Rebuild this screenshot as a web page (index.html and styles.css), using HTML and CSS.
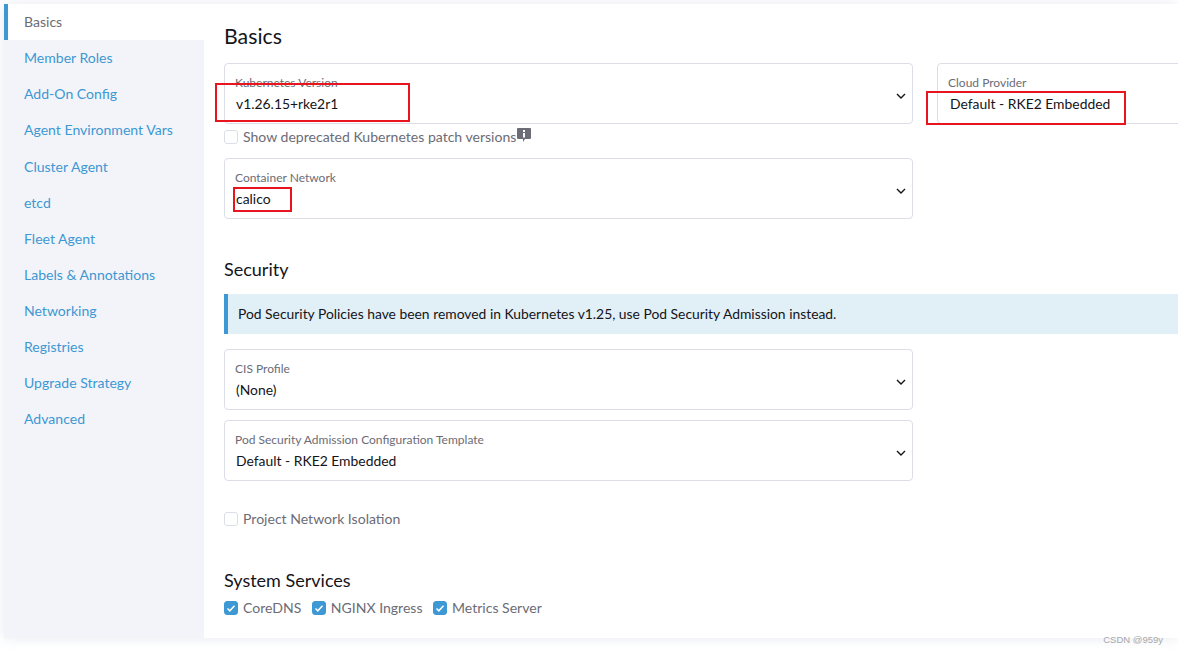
FILE: index.html
```html
<!DOCTYPE html>
<html>

<head>
    <meta charset="UTF-8">
    <title>Cluster Configuration</title>
    <link rel="stylesheet" href="styles.css">
</head>

<body>
<div class="panel">
    <ul class="tabs">
        <li class="active"><a>Basics</a></li>
        <li><a>Member Roles</a></li>
        <li><a>Add-On Config</a></li>
        <li><a>Agent Environment Vars</a></li>
        <li><a>Cluster Agent</a></li>
        <li><a>etcd</a></li>
        <li><a>Fleet Agent</a></li>
        <li><a>Labels &amp; Annotations</a></li>
        <li><a>Networking</a></li>
        <li><a>Registries</a></li>
        <li><a>Upgrade Strategy</a></li>
        <li><a>Advanced</a></li>
    </ul>
    <div class="content">
        <h2 class="title">Basics</h2>
        <div class="row">
            <div class="select wide">
                <label>Kubernetes Version</label>
                <span class="value">v1.26.15+rke2r1</span>
                <svg class="chevron" viewBox="0 0 10 6"><path d="M1 1l4 4 4-4"/></svg>
                <i class="mark mark-version"></i>
            </div>
            <div class="select provider">
                <label>Cloud Provider</label>
                <span class="value">Default - RKE2 Embedded</span>
                <i class="mark mark-provider"></i>
            </div>
        </div>
        <div class="check check-deprecated">
            <span class="box"></span>
            <span>Show deprecated Kubernetes patch versions</span>
            <svg class="info" viewBox="0 0 14 14"><path d="M1 0h12a1 1 0 0 1 1 1v9a1 1 0 0 1-1 1H8l-2 3v-3H1a1 1 0 0 1-1-1V1a1 1 0 0 1 1-1z"/><rect class="info-dot" x="6" y="2" width="2" height="2"/><rect class="info-dot" x="6" y="5" width="2" height="4.500"/></svg>
        </div>
        <div class="select wide">
            <label>Container Network</label>
            <span class="value">calico</span>
            <svg class="chevron" viewBox="0 0 10 6"><path d="M1 1l4 4 4-4"/></svg>
            <i class="mark mark-network"></i>
        </div>

        <h3 class="heading security">Security</h3>
        <div class="banner">Pod Security Policies have been removed in Kubernetes v1.25, use Pod Security Admission instead.</div>
        <div class="select wide">
            <label>CIS Profile</label>
            <span class="value">(None)</span>
            <svg class="chevron" viewBox="0 0 10 6"><path d="M1 1l4 4 4-4"/></svg>
        </div>
        <div class="select wide template">
            <label>Pod Security Admission Configuration Template</label>
            <span class="value">Default - RKE2 Embedded</span>
            <svg class="chevron" viewBox="0 0 10 6"><path d="M1 1l4 4 4-4"/></svg>
        </div>
        <div class="check check-isolation">
            <span class="box"></span>
            <span>Project Network Isolation</span>
        </div>

        <h3 class="heading services">System Services</h3>
        <div class="services-row">
            <div class="check">
                <span class="box on"><svg viewBox="0 0 14 14"><path d="M3.500 7.500l2.300 2.300 4.700-5"/></svg></span>
                <span>CoreDNS</span>
            </div>
            <div class="check">
                <span class="box on"><svg viewBox="0 0 14 14"><path d="M3.500 7.500l2.300 2.300 4.700-5"/></svg></span>
                <span>NGINX Ingress</span>
            </div>
            <div class="check">
                <span class="box on"><svg viewBox="0 0 14 14"><path d="M3.500 7.500l2.300 2.300 4.700-5"/></svg></span>
                <span>Metrics Server</span>
            </div>
        </div>
    </div>
</div>
<span class="watermark">CSDN @959y</span>
</body>

</html>
```

FILE: styles.css
```css
* {
    padding: 0;
    margin: 0;
    box-sizing: border-box;
    list-style-type: none;
}

html,
body {
    height: 100%;
    overflow: hidden;
}

body {
    background: #fff;
    font-family: Lato, "Liberation Sans", sans-serif;
    font-size: 14px;
    color: #141419;
}

.panel {
    display: flex;
    height: 634px;
    margin: 4px 0 0 4px;
    background: #fff;
    box-shadow: 0 0 12px rgba(190, 195, 215, 0.35);
}

.tabs {
    flex: 0 0 200px;
    padding-bottom: 4px;
    background: #f3f4f9;
}

.tabs li {
    height: 36.100px;
    padding: 0 0 0 20px;
    line-height: 36.100px;
    font-size: 14.050px;
    color: #3d98d3;
}

.tabs li.active {
    height: 36.300px;
    padding-left: 16px;
    border-left: 4px solid #3d98d3;
    background: #fff;
    color: #6c6c76;
    line-height: 36px;
}

.content {
    flex: 1;
    min-width: 0;
    padding: 20px 0 0 20px;
    overflow: hidden;
}

.title {
    height: 39px;
    font-size: 21.300px;
    font-weight: 400;
    line-height: 25px;
}

.row {
    display: flex;
    gap: 24px;
}

.select {
    position: relative;
    height: 61px;
    padding: 10px 10px 0;
    border: 1px solid #dcdee7;
    border-radius: 4px;
    background: #fff;
}

.wide {
    flex: none;
    width: 689px;
}

.provider {
    flex: none;
    width: 300px;
}

.select label {
    display: block;
    height: 17px;
    font-size: 12px;
    line-height: 17px;
    color: #6c6c76;
}

.select .value {
    display: block;
    margin: 3px 0 0 1px;
    font-size: 13.900px;
    line-height: 20px;
}

.provider .value {
    margin-left: 2px;
}

.chevron {
    position: absolute;
    top: 29px;
    right: 6px;
    width: 10px;
    height: 6px;
    fill: none;
    stroke: #141419;
    stroke-width: 1.400;
}

.mark {
    position: absolute;
    border: 2px solid #e8141e;
}

.mark-version {
    top: 19px;
    left: -10px;
    width: 195px;
    height: 39px;
}

.mark-provider {
    top: 27px;
    left: -12px;
    width: 200px;
    height: 34px;
}

.mark-network {
    top: 28px;
    left: 8px;
    width: 59px;
    height: 25px;
}

.check {
    display: flex;
    align-items: center;
    gap: 5px;
    height: 20px;
    font-size: 14.050px;
    color: #6c6c76;
}

.check .box {
    margin-top: 1px;
}

.check-deprecated {
    margin: 2px 0 12px;
}

.check-isolation {
    margin-top: 27px;
}

.box {
    display: block;
    flex: none;
    width: 14px;
    height: 14px;
    border: 1px solid #dcdee7;
    border-radius: 3px;
    background: #fff;
}

.box.on {
    border-color: #3d98d3;
    background: #3d98d3;
}

.box svg {
    display: block;
    width: 14px;
    height: 14px;
    margin: -1px;
    fill: none;
    stroke: #fff;
    stroke-width: 1.500;
}

.info {
    flex: none;
    width: 14px;
    height: 14px;
    margin: -2px 0 0 -4px;
    fill: #6c6c76;
}

.info-dot {
    fill: #fff;
}

.heading {
    font-size: 18px;
    font-weight: 400;
    line-height: 22px;
}

.security {
    margin-top: 39px;
}

.banner {
    height: 40px;
    margin: 14px 0 15px;
    padding-left: 10px;
    border-left: 4px solid #3d98d3;
    background: #e1eff7;
    line-height: 40px;
    font-size: 13.860px;
    white-space: nowrap;
}

.template {
    margin-top: 10px;
}

.services {
    margin-top: 41px;
}

.services-row {
    display: flex;
    gap: 10.500px;
    margin-top: 6px;
}

.watermark {
    position: absolute;
    right: 15px;
    bottom: 9px;
    font-family: "Liberation Sans", sans-serif;
    font-size: 9.500px;
    color: #a8a8ac;
}
```
